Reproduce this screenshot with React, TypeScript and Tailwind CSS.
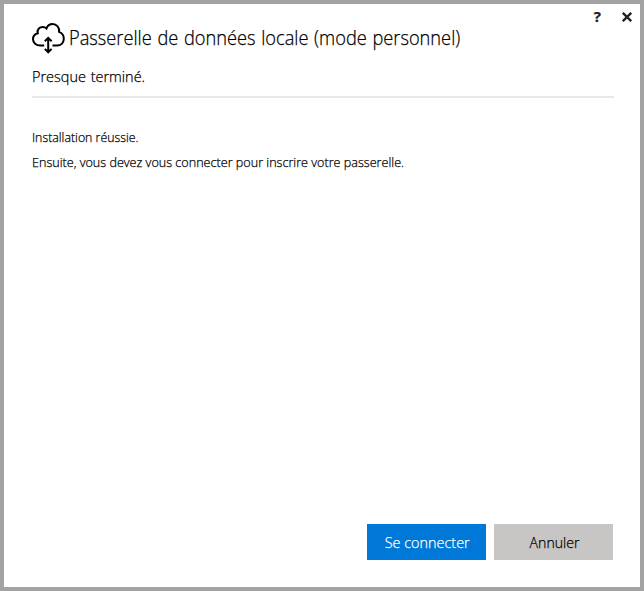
function CloudIcon() {
  return (
    <svg className="h-[32px] w-[34px] shrink-0" viewBox="0 0 34 32" fill="none" stroke="#000" strokeWidth="2">
      <path d="M12.2 23.5H8.2C4.2 23.5 1 20.9 1 17.3C1 14.2 3 12 5.8 11.3C4.7 7.6 7.5 5 10.8 5C12.3 5 13.5 5.5 14.5 6.5C15.6 3.6 17.8 2.1 20.5 2.1C24.7 2.1 27.7 5.4 27.1 9.9C30.1 11 31.8 13.6 31.8 16.7C31.8 20.7 29 23.5 25 23.5H20.5" />
      <path d="M16.2 16.5V30M12.8 19.3L16.2 15.9L19.6 19.3M12.8 26.9L16.2 30.3L19.6 26.9" />
    </svg>
  );
}

export default function App() {
  return (
    <div className="flex h-[591px] w-[644px] flex-col border-4 border-[#a3a3a3] bg-white font-['Open_Sans','Noto_Sans',sans-serif] font-light text-black [-webkit-text-stroke:0.25px_currentColor]">
      <div className="flex h-[18px] items-center justify-end pt-[8px] pr-[8px] text-[#222]">
        <button className="mr-[21px] pb-[2px] text-[15px] leading-none font-bold" aria-label="Aide">?</button>
        <button aria-label="Fermer">
          <svg className="h-[10px] w-[10px]" viewBox="0 0 10 10" stroke="currentColor" strokeWidth="2.3">
            <path d="M.8.8L9.2 9.2M9.2.8L.8 9.2" />
          </svg>
        </button>
      </div>
      <header className="mr-[26px] ml-[28px] h-[76px] border-b-2 border-[#e8e8e8]">
        <div className="flex h-[32px] items-center">
          <CloudIcon />
          <h1 className="ml-[3px] text-[20px] leading-[28px] whitespace-nowrap"><span className="inline-block origin-left scale-x-[0.912] [word-spacing:1px]">Passerelle de données locale (mode personnel)</span></h1>
        </div>
        <p className="mt-[12px] text-[15px] leading-[20px]"><span className="inline-block origin-left scale-x-[0.965] [word-spacing:1px]">Presque terminé.</span></p>
      </header>
      <main className="ml-[28px] flex-1 pt-[26px] text-[13px] leading-[26px]">
        <p><span className="inline-block origin-left scale-x-[0.95]">Installation réussie.</span></p>
        <p className="-mt-px"><span className="inline-block origin-left scale-x-[0.969]">Ensuite, vous devez vous connecter pour inscrire votre passerelle.</span></p>
      </main>
      <footer className="mr-[27px] mb-[27px] flex justify-end gap-2 text-[15px]">
        <button className="h-9 w-[119px] bg-[#0078d7] pl-px text-white"><span className="inline-block scale-x-[0.96]">Se connecter</span></button>
        <button className="h-9 w-[119px] bg-[#c8c6c4] pl-[2px]"><span className="inline-block scale-x-[0.94]">Annuler</span></button>
      </footer>
    </div>
  );
}
